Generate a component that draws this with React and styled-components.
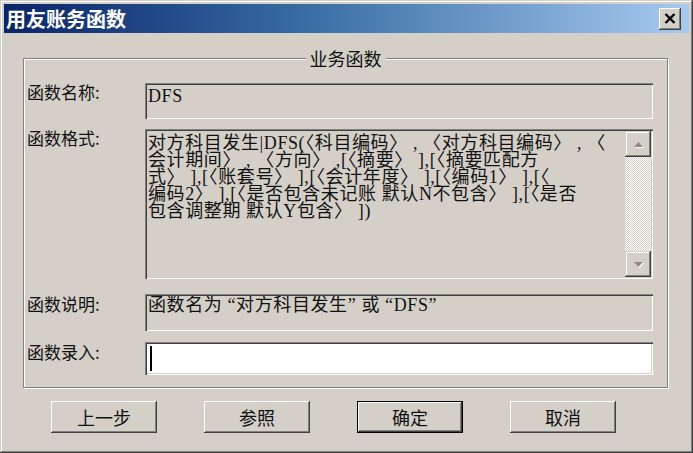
import styled, { createGlobalStyle } from "styled-components";

const face = "#d4d0c8";
const cjk = `"Noto Sans CJK SC", sans-serif`;
const fieldFont = `"Liberation Serif", "Noto Sans CJK SC", serif`;

const GlobalStyle = createGlobalStyle`
  html, body {
    margin: 0;
    padding: 0;
    background: ${face};
  }
  body {
    width: 693px;
    height: 453px;
    overflow: hidden;
  }
`;

const Window = styled.div`
  width: 693px;
  height: 453px;
  box-sizing: border-box;
  padding: 4px;
  display: flex;
  flex-direction: column;
  background: ${face};
  font-family: ${cjk};
  color: #111;
  box-shadow: inset -1px -1px #404040, inset 1px 1px ${face},
    inset -2px -2px #808080, inset 2px 2px #fff;
`;

const TitleBar = styled.div`
  height: 29px;
  display: flex;
  align-items: center;
  justify-content: space-between;
  padding: 0 8px 0 2px;
  background: linear-gradient(90deg, #0a246a 0%, #3a6ea5 45%, #a6caf0 100%);
`;

const TitleText = styled.span`
  color: #fff;
  font-weight: 700;
  font-size: 20px;
  line-height: 29px;
`;

const CloseButton = styled.button`
  width: 22px;
  height: 22px;
  padding: 0;
  border: none;
  display: flex;
  align-items: center;
  justify-content: center;
  background: ${face};
  box-shadow: inset -1px -1px #404040, inset 1px 1px #fff,
    inset -2px -2px #808080, inset 2px 2px ${face};
`;

const Body = styled.div`
  display: flex;
  flex-direction: column;
  padding: 25px 21px 0 19px;
`;

const GroupBox = styled.div`
  position: relative;
  display: flex;
  flex-direction: column;
  padding: 24px 14px 12px 3px;
  border: 1px solid #808080;
  box-shadow: inset 1px 1px #fff, 1px 1px #fff;
`;

const Legend = styled.span`
  position: absolute;
  top: -11px;
  left: 50%;
  transform: translateX(-50%);
  padding: 0 4px;
  background: ${face};
  font-size: 18px;
  line-height: 20px;
`;

const Row = styled.div`
  display: flex;
  margin-top: ${({ $gap }) => $gap || 0}px;
`;

const Label = styled.div`
  width: 118px;
  flex: none;
  font-size: 17px;
  line-height: 18px;
  padding-top: ${({ $pad }) => $pad ?? 0}px;
`;

const Field = styled.div`
  width: 508px;
  height: ${({ $h }) => $h}px;
  box-sizing: border-box;
  padding: 2px;
  display: flex;
  background: ${({ $white }) => ($white ? "#fff" : face)};
  box-shadow: inset 1px 1px #808080, inset 2px 2px #404040,
    inset -1px -1px #fff, inset -2px -2px ${face};
`;

const FieldText = styled.div`
  flex: 1;
  padding: ${({ $pad }) => $pad ?? 3}px 0 0 1px;
  font-family: ${fieldFont};
  font-size: 18px;
  line-height: 17px;
  letter-spacing: 0.6px;
  white-space: pre;
  color: #111;
  overflow: hidden;
`;

const Caret = styled.span`
  width: 2px;
  height: 25px;
  margin: 2px 0 0 3px;
  background: #000;
`;

const ScrollBar = styled.div`
  width: 26px;
  display: flex;
  flex-direction: column;
`;

const ScrollButton = styled.div`
  height: 26px;
  display: flex;
  align-items: center;
  justify-content: center;
  background: ${face};
  box-shadow: inset -1px -1px #404040, inset 1px 1px ${face},
    inset -2px -2px #808080, inset 2px 2px #fff;
`;

const Track = styled.div`
  flex: 1;
  background: repeating-conic-gradient(#fff 0 25%, ${face} 0 50%) 0 0 / 2px 2px;
`;

const ButtonRow = styled.div`
  display: flex;
  gap: 47px;
  padding-left: 28px;
  margin-top: 13px;
`;

const Button = styled.button`
  width: 106px;
  height: 32px;
  padding: 0;
  border: ${({ $default }) => ($default ? "1px solid #000" : "none")};
  background: ${face};
  font-family: ${cjk};
  font-size: 18px;
  color: #111;
  box-shadow: ${({ $default }) =>
    $default
      ? `inset -1px -1px #404040, inset 1px 1px #fff, inset -2px -2px #808080`
      : `inset -1px -1px #404040, inset 1px 1px #fff, inset -2px -2px #808080, inset 2px 2px ${face}`};
`;

const Arrow = ({ down }) => (
  <svg width="11" height="7" viewBox="0 0 11 7">
    <polygon
      points={down ? "1,1 10,1 5.5,6" : "1,6 10,6 5.5,1"}
      transform="translate(1 1)"
      fill="#fff"
    />
    <polygon points={down ? "1,1 10,1 5.5,6" : "1,6 10,6 5.5,1"} fill="#8c8a86" />
  </svg>
);

const formatLines = [
  "对方科目发生|DFS(〈科目编码〉 , 〈对方科目编码〉 , 〈",
  "会计期间〉 , 〈方向〉 ,[〈摘要〉 ],[〈摘要匹配方",
  "式〉 ],[〈账套号〉 ],[〈会计年度〉 ],[〈编码1〉 ],[〈",
  "编码2〉 ],[〈是否包含未记账 默认N不包含〉 ],[〈是否",
  "包含调整期 默认Y包含〉 ])",
];

export default function App() {
  return (
    <>
      <GlobalStyle />
      <Window>
        <TitleBar>
          <TitleText>用友账务函数</TitleText>
          <CloseButton aria-label="关闭">
            <svg width="12" height="11" viewBox="0 0 12 11">
              <path d="M1.5 1 L10.5 10 M10.5 1 L1.5 10" stroke="#000" strokeWidth="2.4" />
            </svg>
          </CloseButton>
        </TitleBar>
        <Body>
          <GroupBox>
            <Legend>业务函数</Legend>
            <Row>
              <Label $pad={0}>函数名称:</Label>
              <Field $h={36}>
                <FieldText $pad={3}>DFS</FieldText>
              </Field>
            </Row>
            <Row $gap={10}>
              <Label $pad={-3}>函数格式:</Label>
              <Field $h={150}>
                <FieldText $pad={4}>{formatLines.join("\n")}</FieldText>
                <ScrollBar>
                  <ScrollButton>
                    <Arrow />
                  </ScrollButton>
                  <Track />
                  <ScrollButton>
                    <Arrow down />
                  </ScrollButton>
                </ScrollBar>
              </Field>
            </Row>
            <Row $gap={15}>
              <Label $pad={1}>函数说明:</Label>
              <Field $h={37}>
                <FieldText $pad={1}>函数名为 “对方科目发生” 或 “DFS”</FieldText>
              </Field>
            </Row>
            <Row $gap={11}>
              <Label $pad={1}>函数录入:</Label>
              <Field $h={33} $white>
                <Caret />
              </Field>
            </Row>
          </GroupBox>
          <ButtonRow>
            <Button>上一步</Button>
            <Button>参照</Button>
            <Button $default>确定</Button>
            <Button>取消</Button>
          </ButtonRow>
        </Body>
      </Window>
    </>
  );
}
